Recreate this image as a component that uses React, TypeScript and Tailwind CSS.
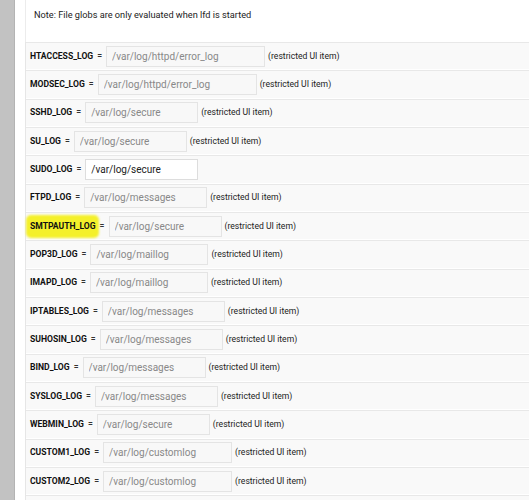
import React from "react";

type LogRow = {
  name: string;
  path: string;
  width: string;
  editable?: boolean;
  marked?: boolean;
};

const rows: LogRow[] = [
  { name: "HTACCESS_LOG", path: "/var/log/httpd/error_log", width: "w-[159px]" },
  { name: "MODSEC_LOG", path: "/var/log/httpd/error_log", width: "w-[159px]" },
  { name: "SSHD_LOG", path: "/var/log/secure", width: "w-[113px]" },
  { name: "SU_LOG", path: "/var/log/secure", width: "w-[113px]" },
  { name: "SUDO_LOG", path: "/var/log/secure", width: "w-[113px]", editable: true },
  { name: "FTPD_LOG", path: "/var/log/messages", width: "w-[123px]" },
  { name: "SMTPAUTH_LOG", path: "/var/log/secure", width: "w-[113px]", marked: true },
  { name: "POP3D_LOG", path: "/var/log/maillog", width: "w-[118px]" },
  { name: "IMAPD_LOG", path: "/var/log/maillog", width: "w-[118px]" },
  { name: "IPTABLES_LOG", path: "/var/log/messages", width: "w-[123px]" },
  { name: "SUHOSIN_LOG", path: "/var/log/messages", width: "w-[123px]" },
  { name: "BIND_LOG", path: "/var/log/messages", width: "w-[123px]" },
  { name: "SYSLOG_LOG", path: "/var/log/messages", width: "w-[123px]" },
  { name: "WEBMIN_LOG", path: "/var/log/secure", width: "w-[113px]" },
  { name: "CUSTOM1_LOG", path: "/var/log/customlog", width: "w-[129px]" },
  { name: "CUSTOM2_LOG", path: "/var/log/customlog", width: "w-[129px]" },
];

const Row = ({ row }: { row: LogRow }) => {
  return (
    <div className="h-[27.33px] shrink-0 flex items-center pl-[4px] bg-[#f9f9f9] border-t border-[#e8e8e8] mb-px">
      <span className="relative font-bold text-[8.6px] text-[#111]">
        {row.marked && (
          <span className="absolute -left-[4px] -right-[3px] -top-[5px] -bottom-[5px] rounded-[5px] bg-[#f4f02a] blur-[0.8px]" />
        )}
        <span className="relative">{row.name}</span>
      </span>
      <span className="ml-[4px] mr-[4px] text-[8.5px] font-bold text-[#333]">=</span>
      <input
        readOnly
        value={row.path}
        className={
          row.editable
            ? `${row.width} h-[21px] border border-[#dddddd] bg-white pl-[5px] text-[10px] text-[#222] outline-none`
            : `${row.width} h-[21px] border border-[#e4e4e4] bg-[#f8f8f8] pl-[5px] text-[10px] text-[#888] outline-none`
        }
      />
      {!row.editable && (
        <span className="ml-[3px] text-[8.6px] text-[#222]">(restricted UI item)</span>
      )}
    </div>
  );
};

const App: React.FC = () => {
  return (
    <div className="w-[529px] h-[500px] overflow-hidden flex bg-white font-['Roboto',sans-serif]">
      <div className="w-[15px] shrink-0 bg-[#c2c2c2] border-r border-[#b3b3b3]" />
      <div className="flex-1 pl-[10px]">
        <div className="h-[42px] pl-[8px] pt-[8px] text-[9.2px] text-[#222] border-l border-[#ececec]">
          Note: File globs are only evaluated when lfd is started
        </div>
        <div className="flex flex-col border-l border-[#e6e6e6]">
          {rows.map((row) => (
            <Row key={row.name} row={row} />
          ))}
          <div className="h-[28px] bg-[#f9f9f9] border-t border-[#e8e8e8]" />
        </div>
      </div>
    </div>
  );
};

export default App;
